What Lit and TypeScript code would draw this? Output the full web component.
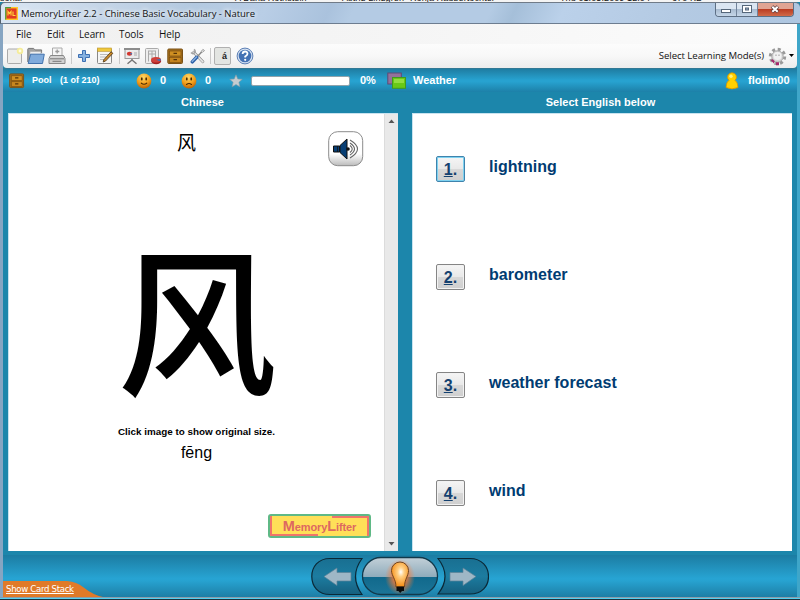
import { LitElement, html, svg, css } from "lit";
import { customElement } from "lit/decorators.js";

const box = (name: string, size: number, body: unknown) =>
  html`<svg class="ic ${name}" width=${size} height=${size} viewBox="0 0 18 18">${body}</svg>`;

const cabinet = (size: number) => box("cabinet", size, svg`
  <rect x="1.8" y="2" width="14.7" height="14.5" rx="1" fill="#a5701c" stroke="#7a5116"/>
  <rect x="3.5" y="4" width="11.5" height="5" fill="#cf9022" stroke="#7c4e10" stroke-width=".7"/>
  <rect x="3.5" y="10.3" width="11.5" height="5" fill="#c68620" stroke="#7c4e10" stroke-width=".7"/>
  <path d="M7.5 6.3h3.5M7.5 12.6h3.5" stroke="#563408" stroke-width="1.3"/>`);

const face = (mouth: string) => html`<svg class="ic" width="18" height="18" viewBox="0 0 18 18">
  <defs><radialGradient id="f" cx=".45" cy=".25" r=".8"><stop offset="0" stop-color="#ffd766"/><stop offset=".55" stop-color="#f3a01c"/><stop offset="1" stop-color="#b05a06"/></radialGradient></defs>
  <circle cx="9" cy="9" r="7.4" fill="url(#f)"/>
  <ellipse cx="6.8" cy="6.9" rx=".9" ry="1.7" fill="#4a2a04"/><ellipse cx="11.2" cy="6.9" rx=".9" ry="1.7" fill="#4a2a04"/>
  <path d=${mouth} fill="none" stroke="#4a2a04" stroke-width="1.1" stroke-linecap="round"/></svg>`;

const toolIcons = {
  fresh: box("fresh", 18, svg`
    <rect x="1.5" y="2" width="14" height="14.5" rx="1" fill="#ededeb" stroke="#aaa"/>
    <circle cx="14" cy="4" r="3.2" fill="#f5ec9a"/><circle cx="14" cy="4" r="1.4" fill="#fffde0"/>`),
  open: box("open", 18, svg`
    <path d="M.8 15V2.2q0-.8.8-.8h5l1.500 1.500h6.500v3" fill="#a3a3a3" stroke="#777"/>
    <path d="M3 4.500h11v4H3z" fill="#eee" stroke="#aaa" stroke-width=".6"/>
    <path d="M3.600 7.200h13.700l-1.800 9.300H1.200z" fill="#80abdc" stroke="#4272ad"/>`),
  print: box("print", 18, svg`
    <path d="M4.500 9V1h9.500v8" fill="#f6f6f6" stroke="#aaa"/>
    <path d="M9.200 2.500v4M7.300 4.500h4" stroke="#999" stroke-width="1.300"/>
    <path d="M2.500 8.500h13l1.500 3v5H1v-5z" fill="#d2d2d2" stroke="#888"/>
    <path d="M2 11.800h14M4.500 14.300h9" stroke="#777"/>`),
  plus: box("plus", 18, svg`
    <path d="M7.500 3.500h3v4h4v3h-4v4h-3v-4h-4v-3h4z" fill="#86b1e0" stroke="#3d6fb2"/>`),
  edit: box("edit", 18, svg`
    <rect x="1.500" y="2" width="14" height="14.500" rx="1" fill="#f5f5f3" stroke="#888"/>
    <rect x="1.500" y="1" width="14" height="3.300" fill="#efc83c" stroke="#b8922a" stroke-width=".6"/>
    <path d="M4 7.500h8M4 10h6M4 12.500h5" stroke="#bbb"/>
    <path d="M15 4.800l1.900 1.500-7.400 7.800-2.300.9.600-2.300z" fill="#c8882a" stroke="#4a3210" stroke-width=".8"/>`),
  board: box("board", 18, svg`
    <path d="M9 11v3M9 13l-4.500 3.800M9 13l4.500 3.800" stroke="#777" stroke-width="1.500"/>
    <rect x="2" y="2.500" width="14" height="9" fill="#ebebeb" stroke="#999"/>
    <rect x="1" y="1" width="16" height="2" fill="#8c8c8c"/>
    <ellipse cx="6.500" cy="6.800" rx="2.700" ry="2" fill="#d4372e"/><path d="M6.500 6.800l2.500-1v2z" fill="#4d76b7"/>
    <path d="M11 6h3M11 8h3" stroke="#aaa"/>`),
  stats: box("stats", 18, svg`
    <rect x="1.500" y="1.500" width="13" height="15" rx="1" fill="#eee" stroke="#aaa"/>
    <path d="M4 4h8M4.500 4v10.500M8 4v10.500M11.500 4v7M4 7h8" stroke="#aaa"/>
    <ellipse cx="12.200" cy="14" rx="5" ry="3.300" fill="#a51f1f"/>
    <ellipse cx="12" cy="12.800" rx="4.900" ry="2.800" fill="#cf403a"/>
    <path d="M12 12.800l4.700-1q.7 1.500-1 2.500z" fill="#456eb0"/>`),
  cabinet: cabinet(18),
  tools: box("tools", 18, svg`
    <path d="M4.500 4.500l11 11.500" stroke="#888" stroke-width="3.400" stroke-linecap="round"/>
    <path d="M4.500 4.500l11 11.500" stroke="#e6e6e6" stroke-width="2" stroke-linecap="round"/>
    <path d="M1.200 4.800q2.500 2.600 4.300.4T4.800 1" stroke="#a2a2a2" stroke-width="1.800" fill="none"/>
    <path d="M9 9.500l6-6.500" stroke="#888" stroke-width="1.800"/><path d="M13.500 3.500l2-2.500 2 1.500-2.500 2.200" fill="#ddd" stroke="#999"/>
    <path d="M8 10.500l-5.200 5.500" stroke="#2f62a8" stroke-width="4.200" stroke-linecap="round"/>
    <path d="M8 10l-5.300 5.500" stroke="#8fb7e6" stroke-width="1.500" stroke-linecap="round"/>`),
  help: box("help", 18, svg`
    <circle cx="9" cy="9" r="7.900" fill="#d9e4f3" stroke="#5b7fb5"/>
    <circle cx="9" cy="9" r="6.300" fill="#4472b4"/>
    <path d="M6.600 7q.1-2.500 2.500-2.500T11.500 6.700Q11.500 8 9.200 9.500v1" fill="none" stroke="#fff" stroke-width="1.800"/>
    <circle cx="9.200" cy="12.800" r="1.100" fill="#fff"/>`),
};

@customElement("app-root")
class AppRoot extends LitElement {
  static styles = css`
    :host { display: block; width: 800px; height: 600px; overflow: hidden; font-family: "Liberation Sans", Arial, sans-serif; }
    * { box-sizing: border-box; }
    svg { display: block; }
    .root { display: flex; flex-direction: column; width: 800px; height: 600px; background: #1c86ab; }
    .behind { height: 2px; flex: none; overflow: hidden; background: #f4f4f4; display: flex; font: 9px/9px "Liberation Sans", sans-serif; color: #111; }
    .behind span { margin-top: -6px; white-space: nowrap; height: 9px; letter-spacing: .1px; }
    .b0 { width: 235px; } .b1 { width: 107px; } .b2 { width: 68px; } .b3 { width: 150px; } .b4 { width: 112px; }
    .title { height: 22px; flex: none; display: flex; align-items: flex-start; padding-left: 4px; border-top: 1px solid #707b88; border-bottom: 1px solid #6d7d90; border-left: 1px solid #54606c; border-radius: 5px 5px 0 0;
      background: linear-gradient(115deg, #dae6f3 0, #c6d6e8 12%, #b3c9e0 24%, #b9cee6 33%, #aac2dd 41%, #b4cbe4 44%, #b4cbe4 61%, #a5bfd9 64%, #bbd1ea 70%, #b4cae3 84%, #aec6e0 100%); }
    .logo { margin-top: 4px; width: 13px; height: 13px; }
    .title .name { font: 9.5px/20px "Open Sans", "Noto Sans", sans-serif; margin: 1px 0 0 3px; letter-spacing: -.02px; color: #111; flex: 1; white-space: nowrap; text-shadow: 0 0 4px #fff, 0 0 6px #fff; }
    .wb { display: flex; margin-right: 6px; height: 14px; border: 1px solid #5d6f84; border-top: 0; border-radius: 0 0 4px 4px; overflow: hidden; }
    .wb div { height: 13px; width: 21px; border-right: 1px solid #71839a; background: linear-gradient(#dbe6f2 0 45%, #a7bacf 46%, #c5d6e8); }
    .wb .x { width: 35px; border: 0; background: linear-gradient(#e0a493 0 45%, #b93a20 46%, #d16a48); }
    .frame { flex: 1; min-height: 0; display: flex; flex-direction: column; border-left: 3px solid #86a5c2; border-right: 3px solid #3fa6c9; position: relative; }
    .menu { height: 20px; flex: none; background: linear-gradient(90deg, #f0f0f0, #f5f5f5 50%, #fcfcfc); display: flex; font: 10px/20px "Open Sans", "Noto Sans", sans-serif; color: #111; padding-left: 13px; letter-spacing: -.1px; }
    .menu span { width: 31px; } .menu .m1 { width: 32px; } .menu .m2 { width: 40px; } .menu .m3 { width: 40px; }
    .tools { height: 24px; flex: none; background: linear-gradient(#fcfcfc, #f8f8f8 50%, #ececec); border-radius: 0 0 4px 4px; display: grid; align-items: center; padding-left: 3px;
      grid-template-columns: 21px 21px 23px 4px 21px 23px 4px 21px 22px 21px 23px 4px 22px 1fr auto 21px 8px; }
    .sep { width: 1px; height: 16px; background: #c9c9c9; }
    .acc { width: 17px; height: 18px; border: 1px solid #b0b0b0; border-radius: 2px; background: #e3e5e2; font: bold 9px/17px "Liberation Sans"; text-align: center; color: #222; padding-left: 4px; }
    .mode { font: 9.6px/24px "Open Sans", "Noto Sans", sans-serif; letter-spacing: -.05px; color: #111; margin-right: 4px; white-space: nowrap; }
    .info { height: 24px; flex: none; border-top: 1px solid #327894; background: linear-gradient(#1f7da2, #27a2d0 48%, #27a2d0 55%, #1d80a8); color: #fff; display: grid; align-items: center; padding-left: 5px; font: bold 11px/23px "Liberation Sans", sans-serif;
      grid-template-columns: 24px 28px 75px 25px 20px 25px 24px 22px 109px 27px 26px 312px 23px 1fr; white-space: nowrap; }
    .info .sm { font-size: 9px; }
    .bar { width: 99px; height: 10px; background: #fff; border: 1px solid #8fa3ac; border-radius: 2px; }
    .heads { height: 21px; flex: none; display: grid; grid-template-columns: 402px 1fr; color: #fff; font: bold 11px/20px "Liberation Sans", sans-serif; text-align: center; }
    .heads .h0 { padding-right: 3px; }
    .heads .h1 { padding-right: 1px; }
    .panels { height: 438px; flex: none; display: grid; grid-template-columns: 390px 380px; grid-template-rows: 438px; gap: 14px; padding-left: 5px; }
    .card { background: #fff; display: grid; grid-template-columns: 1fr 14px; border: 1px solid #c8e3ef; border-width: 1px 0 0 1px; }
    .body { display: flex; flex-direction: column; align-items: center; position: relative; color: #000; }
    .word { font: 19px/28px "Noto Sans CJK SC", sans-serif; margin-top: 14px; margin-right: 20px; }
    .big { font: 500 160px/200px "Noto Sans CJK SC", sans-serif; margin-top: 58px; height: 200px; margin-left: 1px; }
    .click { font: bold 9.85px/14px "Liberation Sans", sans-serif; margin-top: 11px; white-space: nowrap; }
    .pin { font: 16px/22px "Liberation Sans", sans-serif; margin-top: 3px; }
    .sound { position: absolute; left: 319px; top: 17px; width: 36px; height: 36px; }
    .brand { position: absolute; left: 259px; top: 400px; width: 103px; height: 24px; border: 2px solid #5fb986; border-radius: 3px; background: #5fb986; }
    .brand div { height: 20px; background: #ffdf58; border: 2px solid #f0746a; border-top: 0; border-bottom: 0; font: bold 11px/21px "Liberation Sans", sans-serif; color: #dd6861; text-align: center; white-space: nowrap; letter-spacing: -.1px;
      background-image: linear-gradient(#f0746a, #f0746a), linear-gradient(#f0746a, #f0746a); background-size: 37px 2px, 48px 2px; background-position: right top, left bottom; background-repeat: no-repeat; background-origin: border-box; }
    .brand b { font-size: 14.5px; }
    .scroll { background: #e9e9e9; border-left: 1px solid #dcdcdc; display: flex; flex-direction: column; justify-content: space-between; align-items: center; padding: 4px 0 4px; }
    .answers { background: #fff; border: 1px solid #c8e3ef; border-width: 1px 0 0 1px; padding: 41.500px 0 0 23px; }
    .ans { display: flex; height: 108.300px; color: #003c72; font: bold 16px/22px "Liberation Sans", sans-serif; letter-spacing: .04px; }
    .ans:last-child { height: 30px; }
    .num { width: 29px; height: 26px; border: 1px solid #858585; border-radius: 2px; background: linear-gradient(#f5f5f5, #e9e9e9 48%, #d8d8d8 50%, #cfcfcf); box-shadow: inset 0 0 0 1px #f2f2f2; text-align: center; line-height: 26px; margin: 0 24px 0 0; color: #14416f; }
    .num u { text-underline-offset: 1px; text-decoration-thickness: 1px; }
    .num.on { border-color: #3f83ad; box-shadow: inset 0 0 0 1px #7fd2f0; }
    .foot { height: 46px; flex: none; display: grid; grid-template-columns: 308px 178px 1fr; background: linear-gradient(#1c86ab 0 4px, #1c7ca2 4px, #27a4d3 60%, #27a2d0 65%, #1d7ea5); align-items: end; }
    .nav { align-self: start; margin-top: 5px; }
    .stack { height: 17px; width: 100px; background: #e07a28; clip-path: path("M0 1H64Q74 2 80 7Q90 15 100 17H0Z"); font: 8.600px/18px "DejaVu Sans", sans-serif; letter-spacing: -.32px; color: #fff; padding-left: 3px; text-decoration: underline; white-space: nowrap; }
    .edge { flex: none; height: 3px; background: linear-gradient(#8d9ca8 0 1px, #55d0ef 1px 2px, #17323e 2px); }
  `;

  render() {
    const t = toolIcons;
    const words = ["lightning", "barometer", "weather forecast", "wind"];
    return html`<div class="root">
      <div class="behind"><span class="b0">sonal</span><span class="b1">A Dana Rothstein</span><span class="b2">Astrid Lindgren</span><span class="b3">Ronja Räubertochter</span><span class="b4">Thu 01.05.2009 12:04</span><span>670 KB</span></div>
      <div class="title">
        <svg class="logo" viewBox="0 0 13 13"><rect x=".7" y=".7" width="11.6" height="11.6" fill="#e23a22" stroke="#ffc928" stroke-width="1.4"/><path d="M.7 12.5V.7H6" fill="none" stroke="#4f9a43" stroke-width="1.200"/><path d="M3 8.500V4.500l1.500 2 1.500-2v4M8 4.500v4h2.500" stroke="#ffd83a" fill="none" stroke-width="1.100"/></svg>
        <span class="name">MemoryLifter 2.2 - Chinese Basic Vocabulary - Nature</span>
        <div class="wb">
          <div><svg width="20" height="13"><rect x="5.500" y="6.500" width="9" height="3" fill="#fff" stroke="#56677a"/></svg></div>
          <div><svg width="20" height="13"><rect x="5.500" y="2.500" width="9" height="7" fill="#fff" stroke="#56677a"/><rect x="8.500" y="5" width="3" height="2" fill="#9db0c5" stroke="#56677a"/></svg></div>
          <div class="x"><svg width="35" height="13"><path d="M14 3.500l6 5.500M20 3.500l-6 5.500" stroke="#5d3a3a" stroke-width="3.600"/><path d="M14.300 3.700l5.400 5M19.700 3.700l-5.400 5" stroke="#fff" stroke-width="2"/></svg></div>
        </div>
      </div>
      <div class="frame">
        <div class="menu"><span>File</span><span class="m1">Edit</span><span class="m2">Learn</span><span class="m3">Tools</span><span>Help</span></div>
        <div class="tools">
          ${t.fresh}${t.open}${t.print}<i class="sep"></i>${t.plus}${t.edit}<i class="sep"></i>${t.board}${t.stats}${t.cabinet}${t.tools}<i class="sep"></i>
          <div class="acc">á</div>${t.help}
          <span class="mode">Select Learning Mode(s)</span>
          <svg width="19" height="19" viewBox="0 0 19 19"><circle cx="9.500" cy="9.500" r="7.200" fill="none" stroke="#9a9a9a" stroke-width="3" stroke-dasharray="3 2.655"/><circle cx="9.500" cy="9.500" r="5.700" fill="#d8d8d8" stroke="#a5a5a5"/><path d="M2.800 13.200l2-.9 1.900 1.900-.8 2.300zM8 15.300h3v3H8z" fill="#a6286c"/><circle cx="9.500" cy="9" r="4" fill="#f2f2f2"/><path d="M8 7.500v1.500M11 7.500v1.500" stroke="#999"/></svg>
          <svg width="6" height="4"><path d="M0 0h5L2.500 3z" fill="#000"/></svg>
        </div>
        <div class="info">
          ${cabinet(17)}<span class="sm">Pool</span><span class="sm">(1 of 210)</span>
          ${face("M6.300 11.200Q9 13.200 11.700 11.200")}<span>0</span>
          ${face("M6.500 12.500Q9 10.500 11.500 12.500")}<span>0</span>
          <svg width="14" height="14" viewBox="0 0 14 14"><path d="M7 .8l1.800 4.100 4.500.4-3.400 3 1 4.500L7 10.500l-3.900 2.300 1-4.500-3.400-3 4.500-.4z" fill="#c5ccd0" stroke="#7e98a4" stroke-width=".6"/></svg>
          <div class="bar"></div><span>0%</span>
          <svg width="20" height="18" viewBox="0 0 20 18"><rect x=".8" y="1" width="13.500" height="11" fill="#94729a" stroke="#5d4a74"/><rect x="5.500" y="5.500" width="13" height="10.800" fill="#69c916" stroke="#3f9a1e"/><rect x="7" y="7" width="10" height="4" fill="#92de3f"/></svg>
          <span>Weather</span>
          <svg width="14" height="18" viewBox="0 0 14 18"><path d="M7 .8a4.300 4.300 0 0 1 3 7.500Q12.800 10 13 15.500q-6 2.800-12 0Q1.200 10 4 8.300A4.300 4.300 0 0 1 7 .8z" fill="#ffd000" stroke="#d79300" stroke-width=".8"/><circle cx="6" cy="4.300" r="1.700" fill="#fff07a"/></svg>
          <span>flolim00</span>
        </div>
        <div class="heads"><span class="h0">Chinese</span><span class="h1">Select English below</span></div>
        <div class="panels">
          <div class="card">
            <div class="body">
              <div class="word">风</div>
              <div class="big">风</div>
              <div class="click">Click image to show original size.</div>
              <div class="pin">fēng</div>
              <svg class="sound" viewBox="0 0 36 36"><defs><linearGradient id="s" x2="0" y2="1"><stop offset=".65" stop-color="#fff"/><stop offset="1" stop-color="#bbb"/></linearGradient></defs>
                <rect x=".7" y=".7" width="34" height="34" rx="9" fill="url(#s)" stroke="#8c8c8c"/>
                <path d="M5.500 15h6v6h-6zM12 14.500l7-6.500v20L12 21.500z" fill="#073e74" stroke="#111"/><path d="M9.500 15v6" stroke="#111" stroke-width=".8"/><circle cx="20" cy="18" r="1.800" fill="#111"/>
                <path d="M22 14.500q4.500 3.500 0 7M22 12q9 6 0 12M22 9q15 9 0 18" fill="none" stroke="#666" stroke-width="1.100"/></svg>
              <div class="brand"><div><b>M</b>emory<b>L</b>ifter</div></div>
            </div>
            <div class="scroll"><svg width="7" height="6"><path d="M.5 5h6L3.500 1.500z" fill="#555"/></svg><svg width="7" height="6"><path d="M.5 1h6L3.500 4.500z" fill="#555"/></svg></div>
          </div>
          <div class="answers">${words.map((w, i) => html`<div class="ans"><div class="num ${i ? "" : "on"}"><u>${i + 1}</u>.</div><span>${w}</span></div>`)}</div>
        </div>
        <div class="foot">
          <div class="stack">Show Card Stack</div>
          <svg class="nav" width="178" height="40" viewBox="0 0 178 40">
            <defs>
              <linearGradient id="g" x2="0" y2="1"><stop offset="0" stop-color="#196f91"/><stop offset=".5" stop-color="#1c7ca0"/><stop offset="1" stop-color="#165f7e"/></linearGradient>
              <linearGradient id="c" x2="0" y2="1"><stop offset="0" stop-color="#c3d0d8"/><stop offset=".53" stop-color="#8eabbb"/><stop offset=".54" stop-color="#11698c"/><stop offset="1" stop-color="#1c7598"/></linearGradient>
              <radialGradient id="w"><stop offset=".3" stop-color="#ff7c34"/><stop offset="1" stop-color="#ff7c34" stop-opacity="0"/></radialGradient>
              <radialGradient id="b" cx=".55" cy=".4" r=".55"><stop offset="0" stop-color="#fff"/><stop offset=".35" stop-color="#ffcf84"/><stop offset="1" stop-color="#f6921e"/></radialGradient>
            </defs>
            <path d="M51 2.500H19C7 2.500.8 11 .8 20.500S7 38.500 19 38.500H51Q38 20.500 51 2.500z" fill="url(#g)" stroke="#0b2836" stroke-width="1.200"/>
            <path d="M127 2.500h32c12 0 18.500 8.500 18.500 18s-6.500 17.500-18.500 17.500h-32q14-17.500 0-35.500z" fill="url(#g)" stroke="#0b2836" stroke-width="1.200"/>
            <rect x="51.500" y="1.500" width="75" height="37" rx="18.500" fill="url(#c)" stroke="#12394b" stroke-width="1.300"/>
            <path d="M13 20.500L26 12v4.500h14v8.500H26v4.500z" fill="#9eb7c6" stroke="#5b8298" stroke-width=".7"/>
            <path d="M165 20.500L152 12v4.500h-13v8.500h13v4.500z" fill="#9eb7c6" stroke="#5b8298" stroke-width=".7"/>
            <ellipse cx="89" cy="21" rx="15" ry="18" fill="url(#w)"/>
            <path d="M89 6a8.500 8.500 0 0 1 8.500 8.500C97.500 20 93.500 23 93.500 31h-8.500C85 23 80.500 20 80.500 14.500A8.500 8.500 0 0 1 89 6z" fill="url(#b)" stroke="#704521"/>
            <path d="M85.500 30.500h7.500v4.500h-2l-1.800 2-1.700-2h-2z" fill="#0a0a0a"/>
          </svg>
        </div>
      </div>
      <div class="edge"></div>
    </div>`;
  }
}
